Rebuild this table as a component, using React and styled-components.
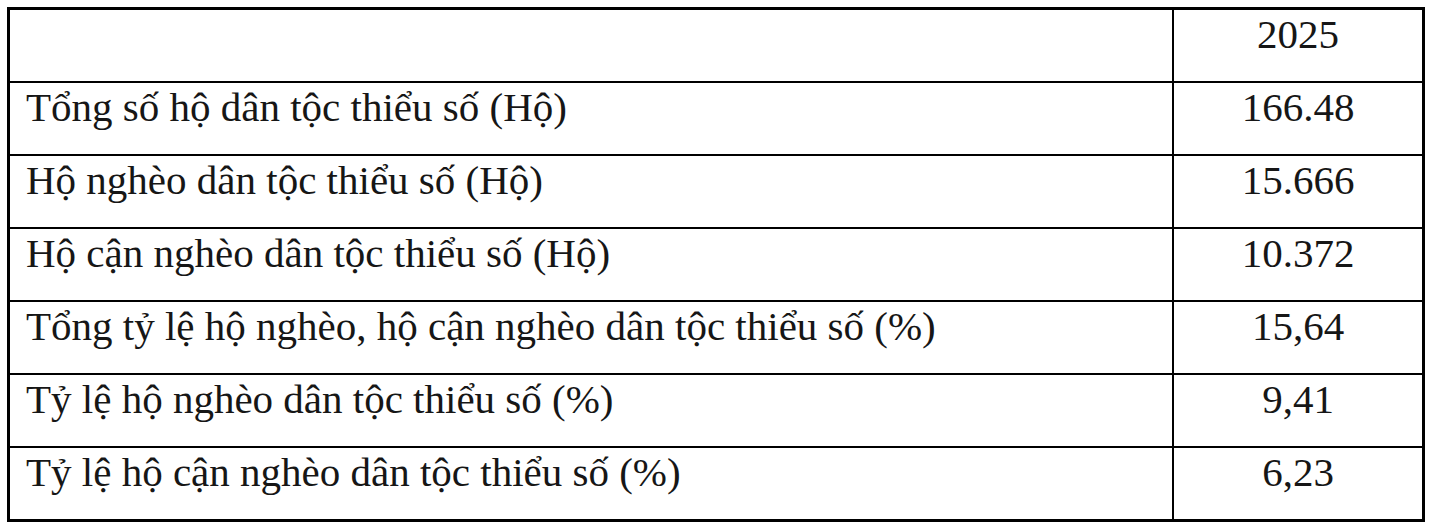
import React from "react";
import styled, { createGlobalStyle } from "styled-components";

const Global = createGlobalStyle`
  html, body { margin: 0; padding: 0; background: #fff; }
  body { padding: 7px 0 0 7px; }
`;

const Table = styled.div`
  width: 1418px;
  box-sizing: border-box;
  border: 3px double #000;
  background: #000;
  display: grid;
  grid-template-columns: 1162px 248px;
  grid-auto-rows: 71px;
  gap: 2px;
  font-family: "Liberation Serif", "Times New Roman", serif;
  font-size: 41px;
  color: #161616;
`;

const Cell = styled.div`
  background: #fff;
  box-sizing: border-box;
  padding-top: 1px;
  padding-left: ${(p) => (p.$center ? "0" : "16px")};
  padding-right: ${(p) => (p.$center ? "0" : "16px")};
  text-align: ${(p) => (p.$center ? "center" : "left")};
  line-height: 1.15;
  white-space: nowrap;
`;

const rows = [
  ["Tổng số hộ dân tộc thiểu số (Hộ)", "166.48"],
  ["Hộ nghèo dân tộc thiểu số (Hộ)", "15.666"],
  ["Hộ cận nghèo dân tộc thiểu số (Hộ)", "10.372"],
  ["Tổng tỷ lệ hộ nghèo, hộ cận nghèo dân tộc thiểu số (%)", "15,64"],
  ["Tỷ lệ hộ nghèo dân tộc thiểu số (%)", "9,41"],
  ["Tỷ lệ hộ cận nghèo dân tộc thiểu số (%)", "6,23"],
];

export default function App() {
  return (
    <>
      <Global />
      <Table>
        <Cell />
        <Cell $center>2025</Cell>
        {rows.map(([label, value]) => (
          <React.Fragment key={label}>
            <Cell>{label}</Cell>
            <Cell $center>{value}</Cell>
          </React.Fragment>
        ))}
      </Table>
    </>
  );
}
